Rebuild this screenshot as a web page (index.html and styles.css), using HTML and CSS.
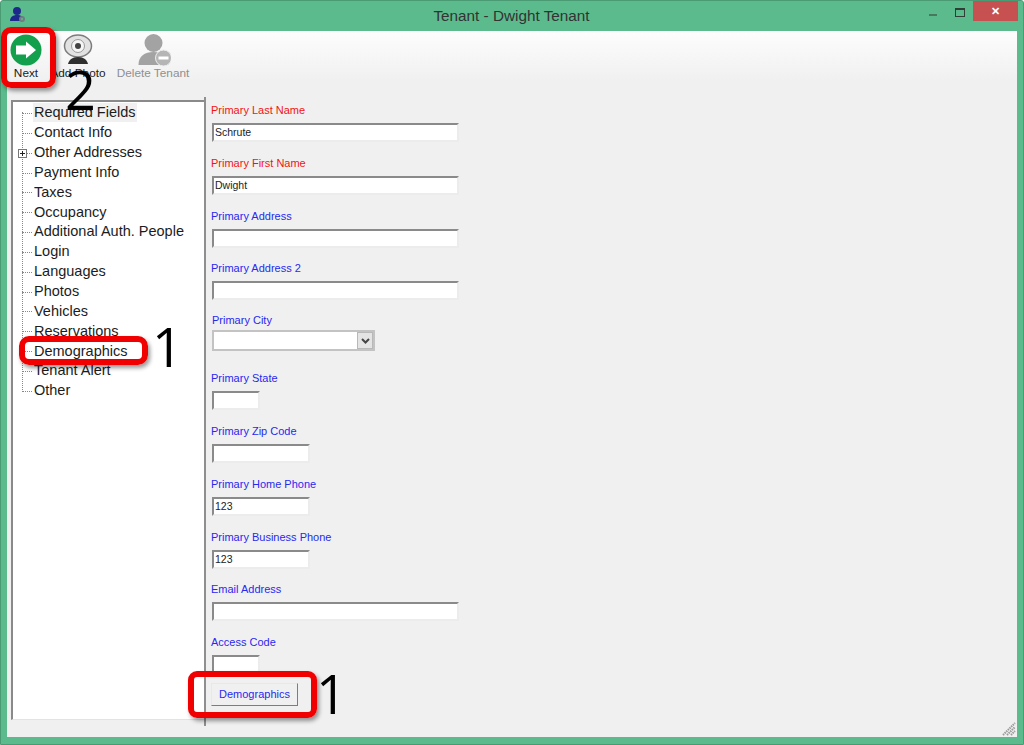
FILE: index.html
```html
<!DOCTYPE html>
<html lang="en">
<head>
<meta charset="utf-8">
<title>Tenant - Dwight Tenant</title>
<link rel="stylesheet" href="styles.css">
</head>
<body>
<div class="window">
  <header class="titlebar">
    <svg class="app-icon" width="18" height="18" viewBox="0 0 18 18"><circle cx="8" cy="5" r="4" fill="#1d2a8c"/><path d="M1 15c0-4 3-6 7-6s6 2 6 3v3z" fill="#1d2a8c"/><circle cx="13" cy="13" r="3" fill="#6f7c80"/><circle cx="13" cy="13" r="1" fill="#5bbb8c"/></svg>
    <div class="title">Tenant - Dwight Tenant</div>
    <div class="controls">
      <span class="min"></span>
      <span class="max"></span>
      <span class="close">✕</span>
    </div>
  </header>
  <div class="client">
    <div class="toolbar">
      <div class="tool tool-next">
        <svg width="34" height="34" viewBox="0 0 34 34"><circle cx="17" cy="17" r="15.5" fill="#12a04c"/><path d="M7 12.500h10V8.500l10 8.500-10 8.500v-4H7z" fill="#fff"/></svg>
        <span>Next</span>
      </div>
      <div class="tool tool-photo">
        <svg width="32" height="34" viewBox="0 0 32 34"><ellipse cx="16" cy="13" rx="13.500" ry="11" fill="#e2e2e2" stroke="#7c7c7c" stroke-width="1.500"/><circle cx="16" cy="13" r="6.500" fill="#f6f6f6" stroke="#9a9a9a"/><circle cx="16" cy="13" r="3" fill="#444"/><path d="M6 31c1-4 4-7 10-7s9 3 10 7z" fill="#2f2f2f"/></svg>
        <span>Add Photo</span>
      </div>
      <div class="tool tool-delete">
        <svg width="36" height="34" viewBox="-1.500 0 36 34"><circle cx="17" cy="10" r="9" fill="#a3a3a3"/><path d="M2 32c0-9 6-13 15-13s15 4 15 13z" fill="#a3a3a3"/><circle cx="27" cy="25" r="8" fill="#b5b5b5" stroke="#eee"/><rect x="22" y="23.500" width="10" height="3" fill="#fff"/></svg>
        <span>Delete Tenant</span>
      </div>
    </div>
    <div class="main">
      <nav class="tree">
        <div class="tree-line"></div>
        <div class="node selected"><span class="dots"></span><span class="node-label">Required Fields</span></div>
        <div class="node"><span class="dots"></span><span class="node-label">Contact Info</span></div>
        <div class="node"><span class="dots"></span><span class="plus"></span><span class="node-label">Other Addresses</span></div>
        <div class="node"><span class="dots"></span><span class="node-label">Payment Info</span></div>
        <div class="node"><span class="dots"></span><span class="node-label">Taxes</span></div>
        <div class="node"><span class="dots"></span><span class="node-label">Occupancy</span></div>
        <div class="node"><span class="dots"></span><span class="node-label">Additional Auth. People</span></div>
        <div class="node"><span class="dots"></span><span class="node-label">Login</span></div>
        <div class="node"><span class="dots"></span><span class="node-label">Languages</span></div>
        <div class="node"><span class="dots"></span><span class="node-label">Photos</span></div>
        <div class="node"><span class="dots"></span><span class="node-label">Vehicles</span></div>
        <div class="node"><span class="dots"></span><span class="node-label">Reservations</span></div>
        <div class="node"><span class="dots"></span><span class="node-label">Demographics</span></div>
        <div class="node"><span class="dots"></span><span class="node-label">Tenant Alert</span></div>
        <div class="node"><span class="dots"></span><span class="node-label">Other</span></div>
      </nav>
      <div class="splitter"></div>
      <form class="form">
        <div class="field"><label class="req">Primary Last Name</label><div class="input w-l">Schrute</div></div>
        <div class="field"><label class="req">Primary First Name</label><div class="input w-l">Dwight</div></div>
        <div class="field"><label>Primary Address</label><div class="input w-l"></div></div>
        <div class="field"><label>Primary Address 2</label><div class="input w-l"></div></div>
        <div class="field field-city"><label>Primary City</label>
          <div class="combo"><span class="combo-btn"><svg width="9" height="6" viewBox="0 0 9 6"><path d="M1 1l3.500 3.500L8 1" fill="none" stroke="#444" stroke-width="2"/></svg></span></div>
        </div>
        <div class="field"><label>Primary State</label><div class="input w-s"></div></div>
        <div class="field"><label>Primary Zip Code</label><div class="input w-m"></div></div>
        <div class="field"><label>Primary Home Phone</label><div class="input w-m">123</div></div>
        <div class="field"><label>Primary Business Phone</label><div class="input w-m">123</div></div>
        <div class="field"><label>Email Address</label><div class="input w-l"></div></div>
        <div class="field field-code"><label>Access Code</label><div class="input w-s"></div></div>
        <div class="demo-btn">Demographics</div>
      </form>
    </div>
    <svg class="grip" width="14" height="14" viewBox="0 0 14 14"><path d="M1 13L13 1M5 13l8-8M9 13l4-4" stroke="#9a9a9a" stroke-width="2" stroke-dasharray="1.500 .8" fill="none"/></svg>
  </div>

  <div class="mark mark-next"></div>
  <div class="mark mark-tree"></div>
  <div class="mark mark-btn"></div>
  <div class="digit digit-2">2</div>
  <div class="digit digit-1a">1</div>
  <div class="digit digit-1b">1</div>
</div>
</body>
</html>
```
FILE: styles.css
```css
* { box-sizing: border-box; }
html, body { margin: 0; padding: 0; }
body { width: 1024px; height: 745px; overflow: hidden; background: #fff; font-family: "Liberation Sans", Arial, sans-serif; }

.window { position: relative; width: 1024px; height: 745px; background: #5bbb8c; border: 1px solid #4a9a74; border-radius: 3px 3px 0 0; display: flex; flex-direction: column; padding: 0 6px 7px 6px; }

.titlebar { height: 30px; flex: none; display: flex; align-items: center; position: relative; }
.app-icon { position: absolute; left: 2px; top: 5px; }
.title { flex: 1; text-align: center; font-size: 15.300px; color: #333; margin-left: -1px; }
.controls { position: absolute; right: -1px; top: 0; display: flex; align-items: flex-start; }
.min { width: 8px; height: 2px; background: #47795f; margin: 13px 18px 0 0; }
.max { width: 10px; height: 9px; border: 1px solid #2f3f38; border-top-width: 2px; margin: 7px 8px 0 0; }
.close { width: 45px; height: 20px; background: #c75050; color: #fff; font-size: 11px; font-weight: bold; text-align: center; line-height: 20px; }

.client { flex: 1; background: #f0f0f0; display: flex; flex-direction: column; position: relative; min-height: 0; }

.toolbar { height: 50px; flex: none; display: flex; background: linear-gradient(#fdfdfd, #f0f0f0); padding-left: 1px; }
.tool { display: flex; flex-direction: column; align-items: center; font-size: 11.800px; padding-top: 2px; }
.tool svg { flex: none; }
.tool span { margin-top: 0; white-space: nowrap; line-height: 13px; }
.tool-next { width: 36px; color: #222; }
.tool-photo { width: 64px; margin-left: 2px; color: #222; }
.tool-delete { width: 76px; margin-left: 5px; color: #8f8f8f; }

.main { flex: 1; display: flex; min-height: 0; padding-top: 19px; }

.tree { width: 193px; margin: 0 0 17px 4px; background: #fff; border-top: 2px solid #8a8a8a; border-left: 2px solid #8a8a8a; border-bottom: 1px solid #e3e3e3; padding-top: 1px; position: relative; flex: none; }
.tree-line { position: absolute; left: 9px; top: 10px; height: 278px; border-left: 1px dotted #888; }
.node { height: 19.850px; display: flex; align-items: center; font-size: 14.500px; color: #1c1c1c; position: relative; white-space: nowrap; }
.dots { position: absolute; left: 9px; top: 10px; width: 10px; border-top: 1px dotted #888; }
.plus { position: absolute; left: 5px; top: 6px; width: 9px; height: 9px; background: #fff; border: 1px solid #777; }
.plus::before { content: ""; position: absolute; left: 1px; top: 3px; width: 5px; height: 1px; background: #222; }
.plus::after { content: ""; position: absolute; left: 3px; top: 1px; width: 1px; height: 5px; background: #222; }
.node-label { margin-left: 20px; padding: 0 1px; line-height: 19px; }
.selected .node-label { background: #f0f0f0; }

.splitter { width: 2px; margin: -3px 0 11px 0; background: #8f8f8f; flex: none; }

.form { flex: 1; padding: 3px 0 0 5px; position: relative; }
.field { height: 52.800px; display: flex; flex-direction: column; align-items: flex-start; }
.field label { color: #2828f0; font-size: 11px; line-height: 14px; height: 14px; margin-bottom: 6px; white-space: nowrap; }
.field label.req { color: #f01414; }
.field-city { height: 57px; }
.field-city label { margin: -1px 0 3px 1px; }
.field-code { height: 48px; }
.input { height: 19px; margin-left: 1px; background: #fff; border: 2px solid; border-color: #8a8a8a #ececec #ececec #8a8a8a; font-size: 10.500px; line-height: 15px; padding-left: 1px; color: #222; }
.w-l { width: 247px; }
.w-m { width: 98px; }
.w-s { width: 48px; }
.combo { width: 163px; height: 21px; margin-left: 1px; background: #fff; border: 2px solid #c3c3c3; display: flex; justify-content: flex-end; }
.combo-btn { width: 16px; height: 17px; background: #e4e4e4; border: 1px solid #b8b8b8; display: flex; align-items: center; justify-content: center; }
.demo-btn { width: 87px; height: 23px; background: #f0f0f0; border: 1px solid; border-color: #e8e8e8 #7d7d7d #7d7d7d #e8e8e8; color: #2828f0; font-size: 11px; text-align: center; line-height: 21px; }

.grip { position: absolute; right: 1px; bottom: 1px; }

.mark { position: absolute; border: 6px solid #f00000; box-shadow: 2px 3px 4px rgba(0, 0, 0, .4); pointer-events: none; }
.mark-next { left: 0; top: 26px; width: 55px; height: 61px; border-radius: 10px; }
.mark-tree { left: 18px; top: 335px; width: 129px; height: 29px; border-radius: 10px; }
.mark-btn { left: 187px; top: 670px; width: 129px; height: 47px; border-radius: 9px; }

.digit { position: absolute; font-family: "Open Sans", sans-serif; font-weight: 400; color: #000; line-height: 1; pointer-events: none; }
.digit-2 { left: 64px; top: 61px; font-size: 54px; }
.digit-1a { left: 151px; top: 318px; font-size: 54px; }
.digit-1b { left: 315px; top: 665px; font-size: 54px; }
```
